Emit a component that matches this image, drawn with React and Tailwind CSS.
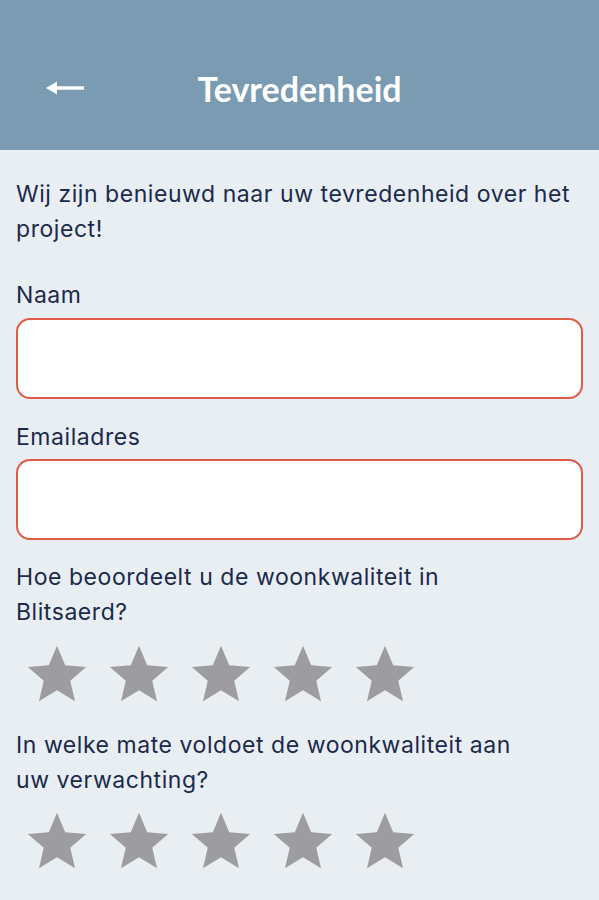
import React from "react";

const Star = () => (
  <svg viewBox="0 0 24 24" className="h-[70px] w-[70px]">
    <path
      fill="#9d9d9f"
      d="M12 17.27L18.18 21l-1.64-7.03L22 9.24l-7.19-.61L12 2 9.19 8.63 2 9.24l5.46 4.73L5.82 21z"
    />
  </svg>
);

const Stars = () => (
  <div className="ml-[6px] flex gap-3">
    {[0, 1, 2, 3, 4].map((i) => (
      <Star key={i} />
    ))}
  </div>
);

export default function App() {
  return (
    <div className="min-h-[900px] w-full bg-[#e9eef2] font-['Inter',sans-serif] text-[#1a2a4c]">
      {/* header */}
      <div className="relative flex h-[150px] items-center justify-center bg-[#7a9bb2] pt-[26px]">
        <svg
          viewBox="0 0 40 16"
          className="absolute left-[45px] top-[80px] h-[16px] w-[40px]"
        >
          <path d="M12 8H39" stroke="#fff" strokeWidth="3.5" />
          <path d="M1 8L12 1.5V14.5Z" fill="#fff" />
        </svg>
        <h1 className="font-['Lato',sans-serif] text-[34px] font-bold text-white">
          Tevredenheid
        </h1>
      </div>

      {/* form */}
      <div className="flex flex-col px-4 pt-[27px] text-[23px] leading-[35px] tracking-[0.55px]">
        <p>Wij zijn benieuwd naar uw tevredenheid over het project!</p>

        <label className="mt-[31px]">Naam</label>
        <input className="mt-[5px] h-[81px] rounded-[14px] border-2 border-[#e05a48] bg-white outline-none" />

        <label className="mt-[21px]">Emailadres</label>
        <input className="mt-[4px] h-[81px] rounded-[14px] border-2 border-[#e05a48] bg-white outline-none" />

        <p className="mt-[20px] max-w-[510px]">
          Hoe beoordeelt u de woonkwaliteit in Blitsaerd?
        </p>
        <div className="mt-[10px]">
          <Stars />
        </div>

        <p className="mt-[18px] max-w-[510px]">
          In welke mate voldoet de woonkwaliteit aan uw verwachting?
        </p>
        <div className="mt-[9px]">
          <Stars />
        </div>
      </div>
    </div>
  );
}
